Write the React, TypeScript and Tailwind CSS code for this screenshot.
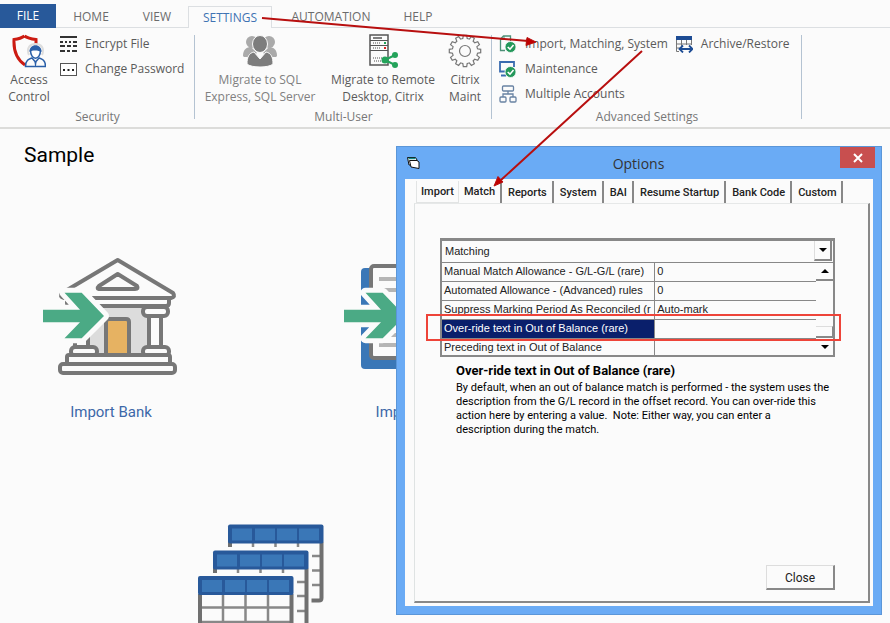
import { ReactNode } from "react";

const menuTabs = [
  { name: "HOME", width: "w-[70px]" },
  { name: "VIEW", width: "w-[62px]" },
  { name: "SETTINGS", width: "w-[84px]" },
  { name: "AUTOMATION", width: "w-[118px]" },
  { name: "HELP", width: "w-14" },
];

const dialogTabs = [
  "Import",
  "Match",
  "Reports",
  "System",
  "BAI",
  "Resume Startup",
  "Bank Code",
  "Custom",
];

const settings = [
  { name: "Manual Match Allowance - G/L-G/L (rare)", value: "0" },
  { name: "Automated Allowance - (Advanced) rules", value: "0" },
  { name: "Suppress Marking Period As Reconciled (r", value: "Auto-mark" },
  { name: "Over-ride text in Out of Balance (rare)", value: "" },
  { name: "Preceding text in Out of Balance", value: "" },
];

const App = () => {
  return (
    <div className="relative h-screen overflow-hidden bg-[#fbfbfb] font-['Open_Sans',sans-serif] text-[#5a5a5a]">
      <MenuBar />
      <Ribbon />
      <Workspace />
      <OptionsDialog />
      <Arrows />
    </div>
  );
};

export default App;

const MenuBar = () => (
  <nav className="flex h-7 items-end text-[12px]">
    <button className="h-6 w-14 shrink-0 bg-[#28599a] text-white">FILE</button>
    {menuTabs.map((tab) => (
      <button
        key={tab.name}
        className={`h-[22px] shrink-0 border-[#dcdfe2] ${tab.width} ${
          tab.name === "SETTINGS" ? "border border-b-0 text-[#3f73b3]" : "border-b text-[#6b6b6b]"
        }`}
      >
        {tab.name}
      </button>
    ))}
    <div className="h-px grow bg-[#dcdfe2]" />
  </nav>
);

const Ribbon = () => (
  <div className="flex h-[101px] border-b-2 border-[#dcdcda] pt-[3px]">
    <Group title="Security" className="w-[195px]">
      <div className="flex">
        <LargeButton icon={<ShieldIcon />} lines={["Access", "Control"]} className="w-[58px]" />
        <div className="ml-[2px]">
          <SmallButton icon={<EncryptIcon />}>Encrypt File</SmallButton>
          <SmallButton icon={<PasswordIcon />}>Change Password</SmallButton>
        </div>
      </div>
    </Group>
    <Group title="Multi-User" className="w-[297px]">
      <div className="flex pl-[2px]">
        <LargeButton
          icon={<UsersIcon />}
          lines={["Migrate to SQL", "Express, SQL Server"]}
          className="w-[126px] text-[#808080]"
        />
        <LargeButton
          icon={<ServerIcon />}
          lines={["Migrate to Remote", "Desktop, Citrix"]}
          className="w-[120px]"
        />
        <LargeButton icon={<GearIcon />} lines={["Citrix", "Maint"]} className="w-[44px]" />
      </div>
    </Group>
    <Group title="Advanced Settings" className="w-[310px]">
      <div className="flex pl-[7px]">
        <div>
          <SmallButton icon={<ImportIcon />}>Import, Matching, System</SmallButton>
          <SmallButton icon={<MaintenanceIcon />}>Maintenance</SmallButton>
          <SmallButton icon={<AccountsIcon />}>Multiple Accounts</SmallButton>
        </div>
        <div className="ml-2">
          <SmallButton icon={<ArchiveIcon />}>Archive/Restore</SmallButton>
        </div>
      </div>
    </Group>
  </div>
);

const Group = ({
  title,
  className,
  children,
}: {
  title: string;
  className: string;
  children: ReactNode;
}) => (
  <section className={`relative flex shrink-0 flex-col ${className}`}>
    <div className="h-[78px]">{children}</div>
    <h2 className="text-center text-[12px] leading-4 text-[#777]">{title}</h2>
    <div className="absolute right-0 top-1 h-[84px] w-px bg-[#b4c3d2]" />
  </section>
);

const LargeButton = ({
  icon,
  lines,
  className,
}: {
  icon: ReactNode;
  lines: string[];
  className: string;
}) => (
  <button className={`flex flex-col items-center whitespace-nowrap text-[12px] leading-[17px] ${className}`}>
    <span className="flex h-10 items-center">{icon}</span>
    {lines.map((line) => (
      <span key={line}>{line}</span>
    ))}
  </button>
);

const SmallButton = ({ icon, children }: { icon: ReactNode; children: ReactNode }) => (
  <button className="flex h-[25px] items-center gap-2 whitespace-nowrap pt-[1px] text-[12px]">
    {icon}
    <span>{children}</span>
  </button>
);

const Workspace = () => (
  <main className="font-[Roboto,sans-serif]">
    <h1 className="pl-6 pt-3 text-[21px] leading-7 text-black">Sample</h1>
    <div className="mt-[87px] flex gap-[165px] pl-[43px]">
      <Task label="Import Bank" icon={<BankIcon />} />
      <Task label="Import G/L" icon={<LedgerIcon />} />
    </div>
    <div className="mt-[102px] pl-[198px]">
      <TablesIcon />
    </div>
  </main>
);

const Task = ({ label, icon }: { label: string; icon: ReactNode }) => (
  <button className="flex w-[136px] shrink-0 flex-col items-center">
    {icon}
    <span className="mt-[26px] text-[15px] leading-5 text-[#3d68a8]">{label}</span>
  </button>
);

const OptionsDialog = () => (
  <div
    role="dialog"
    aria-labelledby="options-title"
    className="absolute bottom-2 left-[396px] right-2 top-[146px] flex flex-col border border-[#5b96d8] bg-[#6aabf5] px-2 pb-2 text-[#222]"
  >
    <header className="relative flex h-8 shrink-0 items-center pl-[2px]">
      <FormIcon />
      <h2 id="options-title" className="grow pr-4 text-center text-[14px] text-[#333]">
        Options
      </h2>
      <button
        aria-label="Close window"
        className="absolute -right-[2px] top-0 flex h-[21px] w-[35px] items-center justify-center bg-[#c84f4f]"
      >
        <svg width="10" height="10" viewBox="0 0 10 10" stroke="#fff" strokeWidth="2">
          <path d="M1 1l8 8M9 1L1 9" />
        </svg>
      </button>
    </header>
    <div className="flex grow flex-col bg-[#fbfbfb] pb-[3px] pl-[9px] pr-[3px] pt-[2px] font-[Roboto,sans-serif] text-[11px]">
      <div role="tablist" className="flex h-[22px] pl-[2px]">
        {dialogTabs.map((tab) => (
          <button
            key={tab}
            role="tab"
            aria-selected={tab === "Match"}
            className={
              tab === "Match"
                ? "border-r-2 border-[#888] pl-[5px] pr-[5px] font-medium"
                : tab === "Import"
                  ? "border-b border-l border-r border-[#e2e4e4] pl-[4px] pr-[4px] pt-[2px] font-medium"
                  : "border-r-2 border-[#888] pl-[6px] pr-[5px] pt-[2px] font-medium"
            }
          >
            {tab}
          </button>
        ))}
      </div>
      <div className="flex grow flex-col border-b-2 border-l border-r-2 border-t border-b-[#888] border-l-[#dfe3e3] border-r-[#888] border-t-[#e6e8e8] pl-[25px] pr-[33px] pt-[34px]">
        <label className="relative block border-l-2 border-r-2 border-t-[3px] border-[#888] font-['Liberation_Sans',sans-serif]">
          <select
            aria-label="Section"
            className="block h-[22px] w-full appearance-none border-b border-[#888] bg-transparent pl-[3px]"
          >
            <option>Matching</option>
          </select>
          <span className="pointer-events-none absolute right-[1px] top-0 flex h-[20px] w-[18px] items-center justify-center border-b-2 border-l border-r-2 border-b-[#888] border-l-[#ddd] border-r-[#888]">
            <span className="border-x-4 border-t-4 border-x-transparent border-t-black" />
          </span>
        </label>
        <div className="relative flex border-b-2 border-l-2 border-r-2 border-[#888] font-['Liberation_Sans',sans-serif]">
          <div className="min-w-0 grow">
            <table className="w-full table-fixed border-separate border-spacing-0 leading-4">
              <colgroup>
                <col className="w-[57%]" />
                <col />
              </colgroup>
              <tbody>
                {settings.map((row, i) => (
                  <tr key={row.name} className="group">
                    <td
                      className={
                        i === 3
                          ? "h-[19px] whitespace-nowrap border-b border-r border-[#888] bg-[#0a1f6b] pb-[2px] pl-[2px] text-white"
                          : "h-[19px] whitespace-nowrap border-b border-r border-[#888] pb-[2px] pl-[2px] group-last:h-4 group-last:border-b-0 group-last:pb-0"
                      }
                    >
                      {row.name}
                    </td>
                    <td className="border-b border-[#888] pb-[2px] pl-[2px] group-last:border-b-0">{row.value}</td>
                  </tr>
                ))}
              </tbody>
            </table>
          </div>
          <div className="flex w-[17px] shrink-0 flex-col">
            <button aria-label="Scroll up" className="flex h-[18px] items-center justify-center border-b-2 border-[#888]">
              <span className="border-x-4 border-b-4 border-x-transparent border-b-black" />
            </button>
            <div className="mt-auto h-3 border-b-2 border-r border-t border-b-[#888] border-r-[#888] border-t-[#ddd]" />
            <button aria-label="Scroll down" className="flex h-[17px] items-center justify-center">
              <span className="border-x-4 border-t-4 border-x-transparent border-t-black" />
            </button>
          </div>
          {/* highlight round the selected row */}
          <div className="pointer-events-none absolute -left-4 -right-2 top-[51px] h-[27px] border-2 border-[#ee4439]" />
        </div>
        <div className="pl-4 pt-[6px] text-black">
          <h3 className="text-[13px] font-bold leading-4">Over-ride text in Out of Balance (rare)</h3>
          <p className="-mr-2 mt-[2px] leading-[14px]">
            By default, when an out of balance match is performed - the system uses the
            <br />
            description from the G/L record in the offset record. You can over-ride this
            <br />
            action here by entering a value.&nbsp; Note: Either way, you can enter a
            <br />
            description during the match.
          </p>
        </div>
        <button className="mb-[11px] ml-auto mt-auto h-[25px] w-[69px] border-b-2 border-l border-r-2 border-t border-b-[#888] border-l-[#ddd] border-r-[#888] border-t-[#ddd] pt-[1px] text-[12px]">
          Close
        </button>
      </div>
    </div>
  </div>
);

const Arrows = () => (
  <svg
    className="pointer-events-none absolute left-0 top-0"
    width="890"
    height="623"
    viewBox="0 0 890 623"
    stroke="#b80f0f"
    strokeWidth="2"
    fill="#c00000"
  >
    <path d="M262 18L528 41M642 51L501 180" />
    <path d="M536 42L527 37.500L526 45.500Z M494 186L498 176.500L503 182Z" strokeWidth="1" />
  </svg>
);

const ShieldIcon = () => (
  <svg width="34" height="34" viewBox="0 0 34 34" fill="none">
    <path
      d="M12.500 2C9 4.500 6 5 2 5.500C1.500 16 4 25 13 31"
      stroke="#cc1b12"
      strokeWidth="3"
    />
    <path d="M12.500 2C16 4.500 20 5 24 5.500V11" stroke="#cc1b12" strokeWidth="3" />
    <path d="M17 21C14 14 18 10 23.500 10S33 14 30 21" stroke="#ddd" strokeWidth="2" />
    <path
      d="M20 24C17 25 13.500 26 13.500 32.500H33.500C33.500 26 30 25 27 24L23.500 28Z"
      fill="#fbfbfb"
      stroke="#2a5fa8"
      strokeWidth="1.500"
    />
    <path d="M18.500 16C18.500 27 28.500 27 28.500 16" fill="#fff" stroke="#2a5fa8" strokeWidth="1.500" />
    <path d="M17.500 18C17 9 30 9 29.500 18C27 16.500 21 15.500 17.500 18Z" fill="#2a5fa8" />
    <path d="M22.500 28H24.500L24 32H23Z" fill="#2a5fa8" />
  </svg>
);

const EncryptIcon = () => (
  <svg width="17" height="16" viewBox="0 0 17 16" stroke="#333" strokeWidth="2">
    <path d="M0 1H17" />
    <path d="M0 6H3M5 6H7M9 6H11M13 6H17" />
    <path d="M0 10H5M7 10H11M13 10H17" />
    <path d="M0 15H5M7 15H10M12 15H17" />
  </svg>
);

const PasswordIcon = () => (
  <svg width="17" height="13" viewBox="0 0 17 13">
    <rect x="0.500" y="0.500" width="16" height="12" fill="#fff" stroke="#555" />
    <path d="M3 7h2M7.500 7h2M12 7h2" stroke="#222" strokeWidth="2" />
  </svg>
);

const UsersIcon = () => (
  <svg width="34" height="33" viewBox="0 0 34 33">
    <g fill="#aaa">
      <circle cx="9" cy="7" r="6" />
      <circle cx="26" cy="7" r="6" />
      <path d="M0 21C0 14 4 12 8 12L14 18L8 22H1Z" />
      <path d="M34 21C34 14 30 12 26 12L20 18L27 22H33Z" />
    </g>
    <ellipse cx="17" cy="9" rx="7.500" ry="8.500" fill="#7d7d7d" stroke="#fbfbfb" />
    <path
      d="M11 17L17 24L23 17C28 18 30 22 30 29C26 33 8 33 4 29C4 22 6 18 11 17Z"
      fill="#7d7d7d"
      stroke="#fbfbfb"
    />
  </svg>
);

const ServerIcon = () => (
  <svg width="30" height="34" viewBox="0 0 30 34" fill="none">
    <rect x="2" y="1" width="18" height="30" stroke="#555" strokeWidth="1.500" />
    <path d="M2 6.500H20M2 11.500H20M2 16.500H20" stroke="#555" strokeWidth="1.200" />
    <path d="M5 4H14" stroke="#555" strokeWidth="1.500" />
    <path d="M5 9H13M5 14H13M5 24H14M6 27H14" stroke="#888" strokeWidth="1.500" strokeDasharray="1 1" />
    <path d="M16 9H18" stroke="#23a35a" strokeWidth="2" />
    <path d="M16 14H18" stroke="#d22" strokeWidth="2" />
    <path d="M27 21L17 26L27 31" stroke="#23a35a" strokeWidth="2" />
    <g fill="#23a35a">
      <circle cx="17" cy="26" r="3.500" />
      <circle cx="27" cy="21" r="3" />
      <circle cx="27" cy="31" r="3" />
    </g>
  </svg>
);

const GearIcon = () => (
  <svg width="34" height="34" viewBox="0 0 34 34" fill="none" stroke="#777" strokeWidth="1.200">
    <circle cx="17" cy="17" r="5.500" />
    {/* one tooth outline, turned round the hub */}
    {[0, 30, 60, 90, 120, 150, 180, 210, 240, 270, 300, 330].map((angle) => (
      <path
        key={angle}
        transform={`rotate(${angle} 17 17)`}
        d="M13.700 4.700L14.800 4.500L15.300 1.300H18.700L19.200 4.500L20.300 4.700"
      />
    ))}
  </svg>
);

const CheckBadge = () => (
  <>
    <circle cx="11.500" cy="12" r="5.500" fill="#23975a" stroke="#fbfbfb" strokeWidth="0.800" />
    <path d="M8.700 12L11 14.200L14.500 10" fill="none" stroke="#fff" strokeWidth="1.600" />
  </>
);

const ImportIcon = () => (
  <svg width="18" height="18" viewBox="0 0 18 18">
    <path d="M6 15.500H1.500V4L4.500 1H11.500V6" fill="none" stroke="#4d9078" strokeWidth="1.300" />
    <path d="M1.500 4.500H5V1" fill="none" stroke="#4d9078" />
    <CheckBadge />
  </svg>
);

const MaintenanceIcon = () => (
  <svg width="18" height="18" viewBox="0 0 18 18">
    <path d="M6 11.500H1V2H15V7" fill="none" stroke="#3a6cb0" strokeWidth="1.800" />
    <path d="M2 15.500H7" stroke="#3a6cb0" strokeWidth="2" />
    <CheckBadge />
  </svg>
);

const AccountsIcon = () => (
  <svg width="18" height="18" viewBox="0 0 18 18" fill="none" stroke="#6882a3" strokeWidth="1.300">
    <rect x="3.500" y="1" width="11" height="5" rx="1" />
    <rect x="1" y="12" width="6" height="5" rx="1" />
    <rect x="11" y="12" width="6" height="5" rx="1" />
    <path d="M9 6V9M4 12V9H14V12" />
  </svg>
);

const ArchiveIcon = () => (
  <svg width="17" height="17" viewBox="0 0 17 17" fill="none">
    <path d="M0 2H16" stroke="#1d4c94" strokeWidth="4" />
    <path d="M0.500 4V15.500H3M15.500 4V9M5.500 4V10M10.500 4V9M0.500 8H15.500M0.500 12H4" stroke="#777" />
    <path d="M4 13H16M7 9.500L3.500 13L7 16.500M13 9.500L16.500 13L13 16.500" stroke="#1d4c94" strokeWidth="1.800" />
  </svg>
);

const FormIcon = () => (
  <svg width="13" height="12" viewBox="0 0 13 12">
    <path d="M0.500 0.500H8.500L10 3V8H2Z" fill="#fff" stroke="#111" />
    <path d="M2.500 3.500H10L12 5V11.500L4 10Z" fill="#fff" stroke="#111" />
    <path d="M1.500 1.500H8.500" stroke="#178a8a" strokeWidth="1.500" />
  </svg>
);

const GreenArrow = () => (
  <path
    d="M0 53.700H37L21.500 36.700H38.700L61 60L38.700 82.300H21.500L37 66.300H0Z"
    fill="#4baa85"
    stroke="#fbfbfb"
    strokeWidth="10"
    strokeLinejoin="round"
    paintOrder="stroke"
  />
);

const BankIcon = () => (
  <svg
    width="136"
    height="120"
    viewBox="0 0 136 120"
    fill="#fbfbfb"
    stroke="#777"
    strokeWidth="4"
    strokeLinejoin="round"
  >
    <rect x="36" y="50" width="74" height="48" fill="#dcdcdc" stroke="none" />
    <rect x="32" y="58" width="13" height="34" />
    <rect x="106" y="58" width="12" height="34" />
    <rect x="100" y="51" width="25" height="9" rx="4" />
    <rect x="28" y="91" width="26" height="9" rx="4" />
    <rect x="100" y="91" width="26" height="9" rx="4" />
    <path d="M63 99V66Q63 63 66 63H83Q86 63 86 66V99Z" fill="#e6b262" />
    <path d="M24 42H126V47Q126 50 123 50H27Q24 50 24 47Z" />
    <path d="M74.700 4L130 37Q133 41 128 42H21Q16 41 19 37Z" />
    <path d="M74.700 18L94 30Q96 33 92 33H57Q53 33 56 30Z" />
    <rect x="24" y="99" width="103" height="10" rx="2" />
    <rect x="17" y="108" width="115" height="9" rx="3" />
    <GreenArrow />
  </svg>
);

const LedgerIcon = () => (
  <svg width="136" height="120" viewBox="0 0 136 120" strokeWidth="4">
    <rect x="17" y="12" width="92" height="101" rx="4" fill="#3a77b7" />
    <rect x="27" y="10" width="92" height="92" rx="3" fill="#fbfbfb" stroke="#777" />
    <path d="M35 23H110M35 34H110M35 79H110M35 89H110" stroke="#b5b5b5" />
    <GreenArrow />
  </svg>
);

const TableHead = ({ x, y }: { x: number; y: number }) => (
  <g transform={`translate(${x} ${y})`} stroke="none">
    <rect width="95.500" height="19" rx="2" fill="#28599a" />
    {[4, 27, 49, 71].map((left) => (
      <rect key={left} x={left} y="4" width="20" height="12" fill="#3a77b7" />
    ))}
  </g>
);

const TablesIcon = () => (
  <svg width="126" height="100" viewBox="0 0 126 100" fill="none" stroke="#888" strokeWidth="2.500">
    <path d="M32 18V23" strokeWidth="4" stroke="#707070" />
    <path d="M55 18V23M77.500 18V23M100 18V23M114 32H123M114 46.500H123M114 61H123" />
    <path d="M123.500 18V74Q123.500 76.500 121 76.500H113.500" strokeWidth="4" stroke="#707070" />
    <path d="M17 44V49" strokeWidth="4" stroke="#707070" />
    <path d="M40 44V49M62.500 44V49M85 44V49M99 58H108M99 72H108M99 87H108" />
    <path d="M108.500 44V100" strokeWidth="4" stroke="#707070" />
    <path d="M25 70V100M47.500 70V100M70 70V100M2 83.500H93M2 98H93" />
    <path d="M2 70V100M93.500 70V100" strokeWidth="4" stroke="#707070" />
    <TableHead x={30} y={0.5} />
    <TableHead x={15} y={26.5} />
    <TableHead x={0} y={52} />
  </svg>
);
